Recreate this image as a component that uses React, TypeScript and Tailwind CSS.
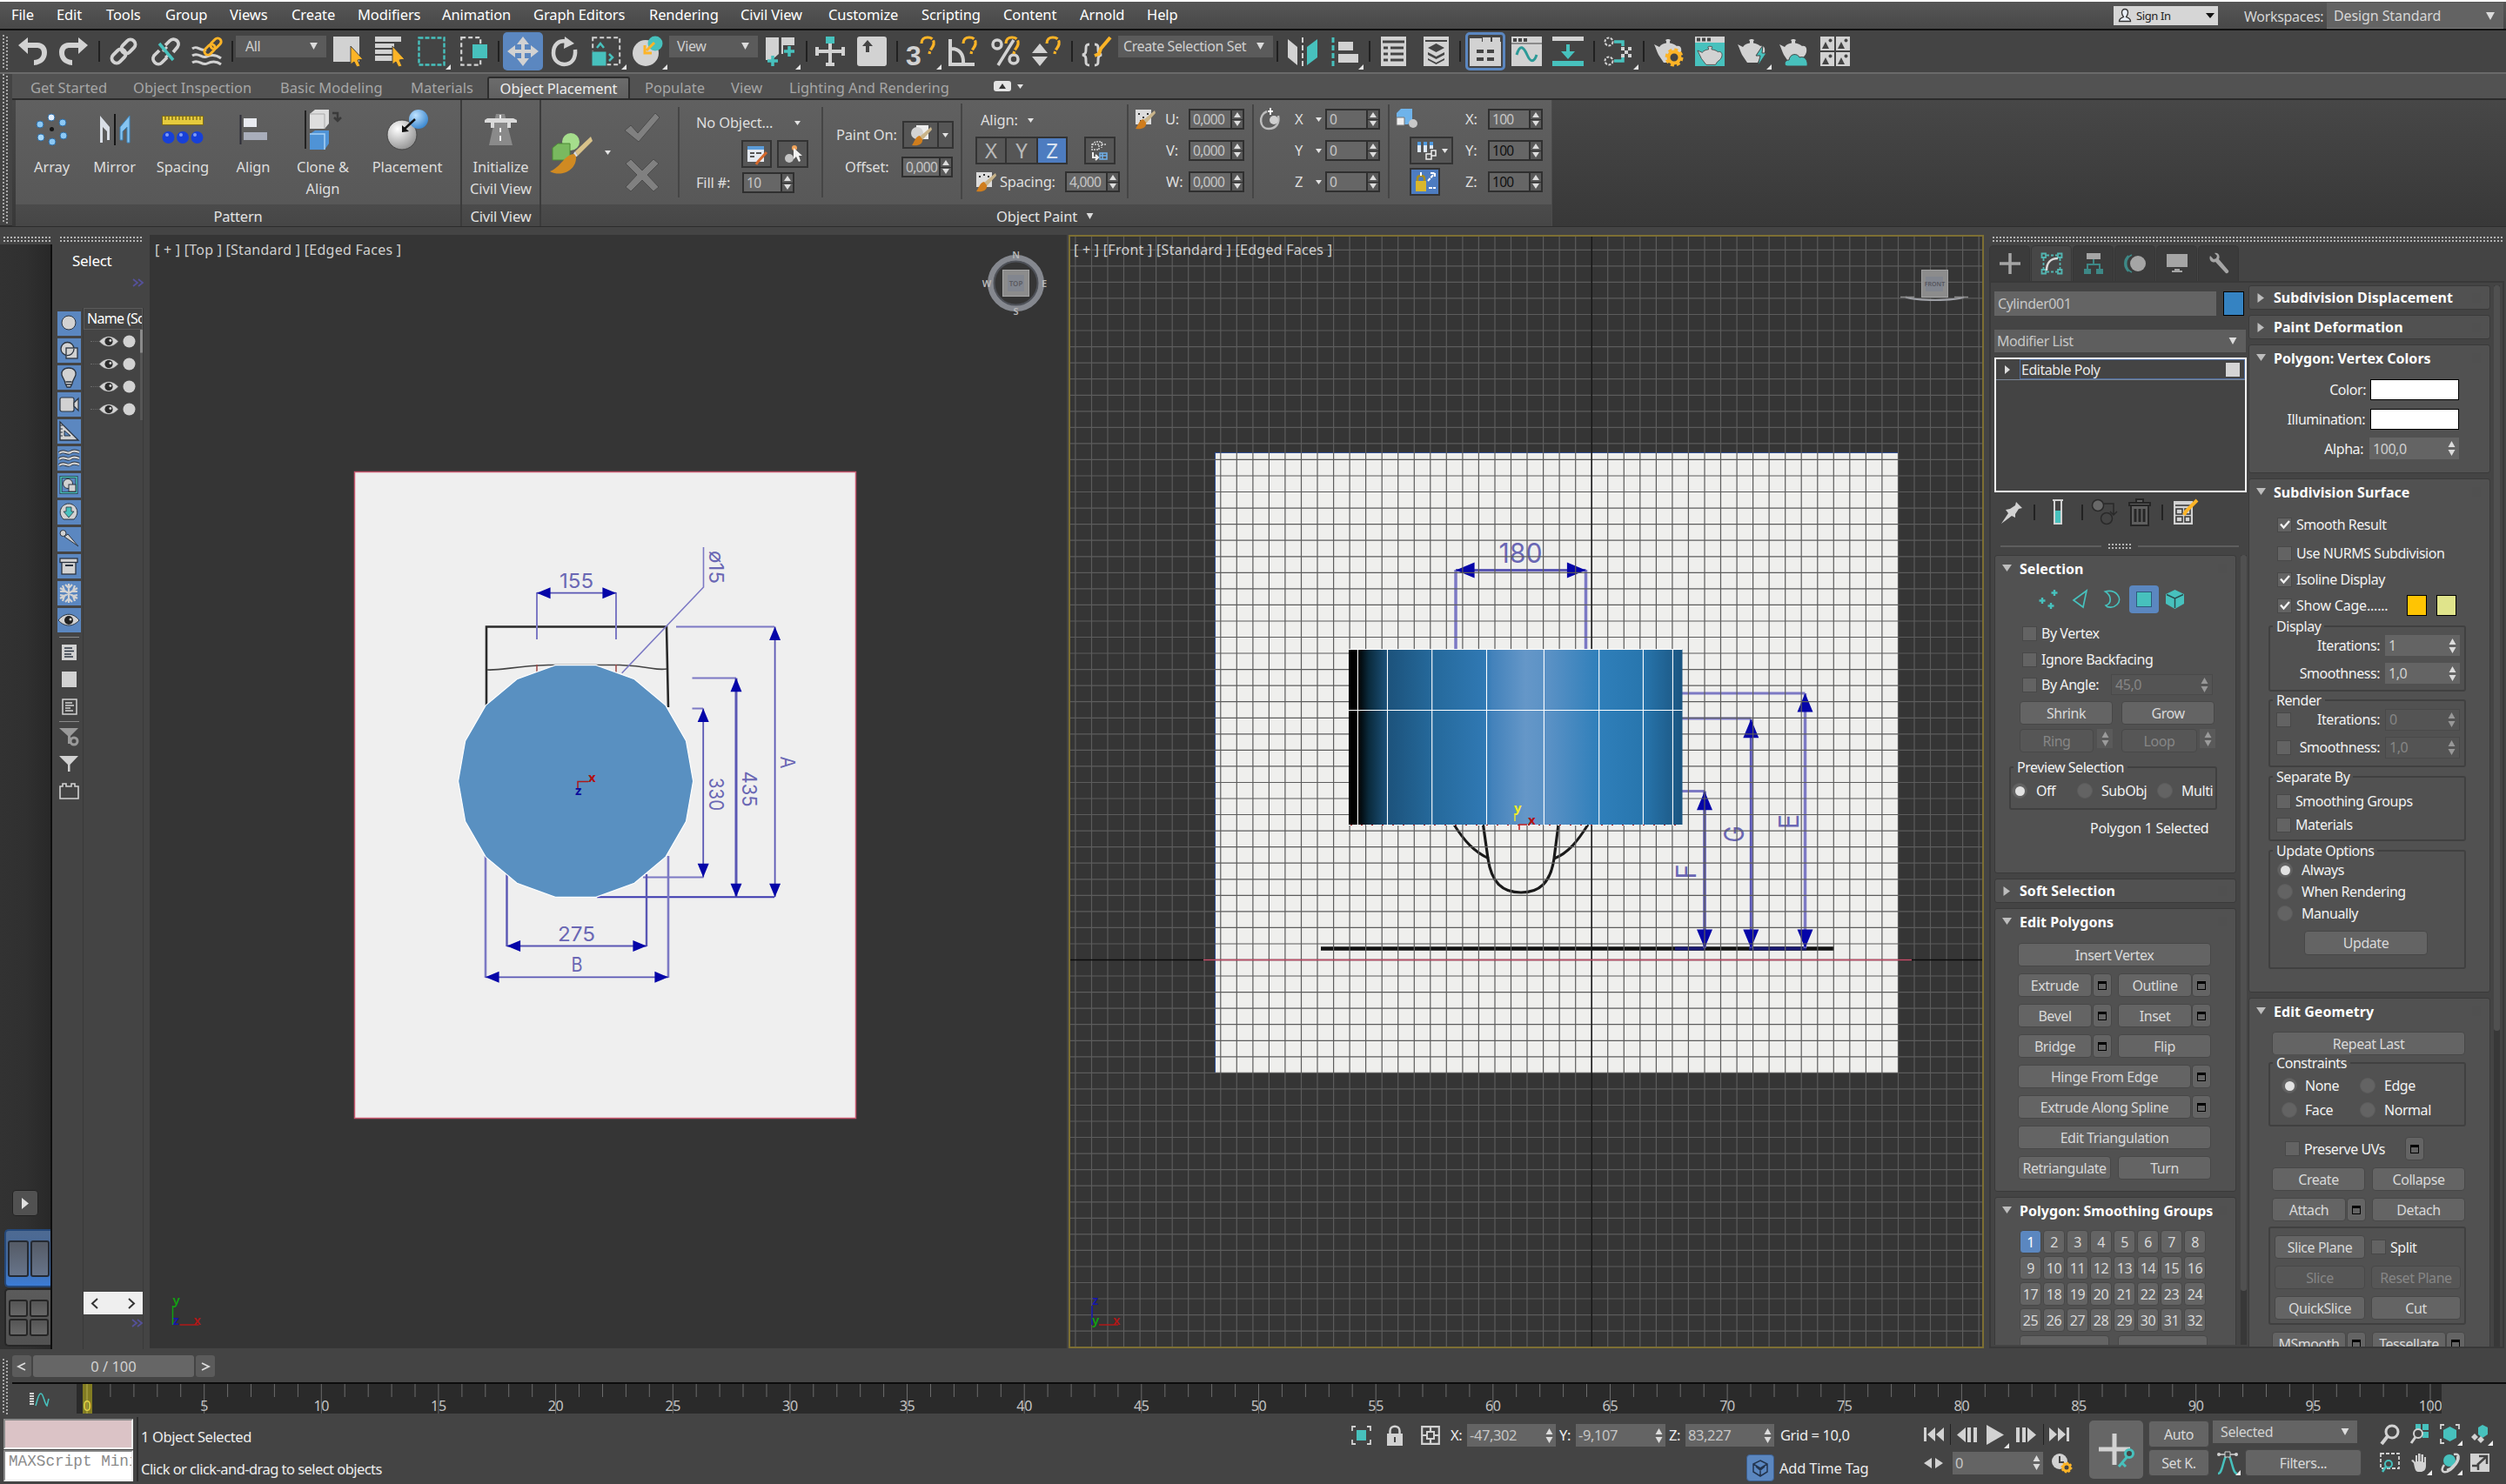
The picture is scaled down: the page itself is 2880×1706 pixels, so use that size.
import React from "react";

type Kids = { children?: React.ReactNode };

/* ---------- small building blocks ---------- */

function Svg({ w, h, vb, c = "", children }: { w: number; h: number; vb?: string; c?: string } & Kids) {
  return (
    <svg width={w} height={h} viewBox={vb ?? `0 0 ${w} ${h}`} className={"block shrink-0 overflow-visible " + c} fill="none">
      {children}
    </svg>
  );
}

const L = "#d2d2d2";
const T = "#47c1bd";
const O = "#fdb427";
const D = "#444444";

function Down({ c = "", w = 10, h = 9 }: { c?: string; w?: number; h?: number }) {
  return (
    <Svg w={w} h={h} vb="0 0 10 9" c={c}>
      <path d="M0 0H10L5 9Z" fill="#dcdcdc" />
    </Svg>
  );
}

function Arrows({ dim = false }: { dim?: boolean }) {
  return (
    <Svg w={9} h={17} c={dim ? "opacity-50" : ""}>
      <path d="M4.500 0L8.500 7H.5ZM4.500 17L8.500 10H.5Z" fill="#dcdcdc" />
    </Svg>
  );
}

function Grip({ c }: { c: string }) {
  return (
    <div className={"shrink-0 bg-[repeating-linear-gradient(90deg,#b4b4b4_0_2px,transparent_2px_4px)] pt-[2px] " + c}>
      <div className="h-[2px] bg-[#444444]" />
    </div>
  );
}

function VGrip({ c }: { c: string }) {
  return (
    <div className={"flex w-[6px] shrink-0 justify-between " + c}>
      <div className="h-full w-[2px] bg-[repeating-linear-gradient(180deg,#a8a8a8_0_2px,transparent_2px_4px)]" />
      <div className="mt-[2px] h-full w-[2px] bg-[repeating-linear-gradient(180deg,#a8a8a8_0_2px,transparent_2px_4px)]" />
    </div>
  );
}

/* ---------- menu bar ---------- */

const MENUS: [string, string][] = [
  ["File", "w-[52px]"], ["Edit", "w-[57px]"], ["Tools", "w-[68px]"], ["Group", "w-[74px]"], ["Views", "w-[71px]"],
  ["Create", "w-[76px]"], ["Modifiers", "w-[97px]"], ["Animation", "w-[105px]"], ["Graph Editors", "w-[133px]"],
  ["Rendering", "w-[105px]"], ["Civil View", "w-[101px]"], ["Customize", "w-[107px]"], ["Scripting", "w-[94px]"],
  ["Content", "w-[88px]"], ["Arnold", "w-[77px]"], ["Help", "w-[60px]"],
];

function MenuBar() {
  return (
    <div className="flex h-[35px] items-center border-t-2 border-b-2 border-t-white border-b-[#111] bg-linear-to-b from-[#565656] to-[#484848] pl-[13px] text-[16.5px] text-white">
      {MENUS.map(([t, w]) => (
        <span key={t} className={"mb-px shrink-0 whitespace-nowrap tracking-[-0.1px] " + w}>{t}</span>
      ))}
      <div className="ml-auto flex h-[22px] w-[120px] items-center bg-[#d6d6d6] pl-[5px] pr-[4px] text-[13px] tracking-[-0.4px] text-[#222]">
        <Svg w={16} h={17}>
          <path d="M8 1.500C10.500 1.500 11.500 3 11.500 5.500C11.500 8 10 9.500 9.500 10.500C12 11.500 14.500 12 14.500 15.500H1.500C1.500 12 4 11.500 6.500 10.500C6 9.500 4.500 8 4.500 5.500C4.500 3 5.500 1.500 8 1.500Z" fill="#e8eef6" stroke="#333" strokeWidth="1.300" />
        </Svg>
        <span className="ml-[5px]">Sign In</span>
        <Svg w={10} h={6} c="ml-auto"><path d="M0 0H10L5 6Z" fill="#111" /></Svg>
      </div>
      <span className="ml-[30px] mt-[2px] w-[95px] text-[16px] tracking-[-0.3px] text-[#d6d6d6]">Workspaces:</span>
      <div className="mr-[3px] flex h-[30px] w-[203px] items-center border-b border-[#777] bg-[#636363] pl-[8px] pr-[10px] pt-[2px] text-[16px] tracking-[-0.1px] text-[#d6d6d6]">
        Design Standard
        <Down c="ml-auto" />
      </div>
    </div>
  );
}

/* ---------- main toolbar ---------- */

function Flyout() {
  return (
    <Svg w={6} h={6} c="mb-[3px] self-end">
      <path d="M6 0V6H0Z" fill="#e6e6e6" />
    </Svg>
  );
}

function Sep({ c }: { c: string }) {
  return <div className={"h-[24px] w-[2px] shrink-0 bg-[#202020] " + c} />;
}

function Combo({ t, c }: { t: string; c: string }) {
  return (
    <div className={"mb-[12px] flex h-[25px] shrink-0 items-center bg-[#5b5b5b] pr-[10px] text-[16px] tracking-[-0.4px] text-[#cfcfcf] " + c}>
      <span className="whitespace-nowrap">{t}</span>
      <Down c="ml-auto" w={9} h={8} />
    </div>
  );
}

const POT = "M1 9L7 12C9 9 12 8 15 7.500V5.500L14 4L16 3H18L20 4L19 5.500V7.500C22 8 25 9 27 11C31 10 33 13 32 18C31 22 28 24 26 26L24 30H12L6 21C4 17 3 13 1 9Z";

function Magnet() {
  return <path d="M17 8C17 3 20 1 24 1C29 1 32 4 31 9C30 13 27 14 26 20" stroke={O} strokeWidth="3.200" strokeDasharray="17 2 12 2 3" />;
}

function Toolbar() {
  return (
    <div className="flex h-[50px] items-center border-b-2 border-[#6a6a6a] bg-[#444444] pl-[3px]">
      <VGrip c="h-[38px]" />
      <Svg w={33} h={34} c="ml-[12px]">
        <path d="M11 1V7H22C29 7 33 12 33 18C33 26 28 32 18 33V27C24 27 27 23 27 19C27 15 25 13 21 13H11V20L0 10Z" fill={L} />
      </Svg>
      <Svg w={33} h={34} c="ml-[14px]">
        <path d="M22 1V7H11C4 7 0 12 0 18C0 26 5 32 15 33V27C9 27 6 23 6 19C6 15 8 13 12 13H22V20L33 10Z" fill={L} />
      </Svg>
      <Sep c="ml-[12px]" />
      <Svg w={34} h={34} c="ml-[10px]">
        <g stroke={L} strokeWidth="4">
          <rect x="-5.500" y="-9" width="11" height="18" rx="5.500" transform="translate(22.500 11.500) rotate(45)" />
          <rect x="-5.500" y="-9" width="11" height="18" rx="5.500" transform="translate(11.500 22.500) rotate(45)" />
        </g>
      </Svg>
      <Svg w={34} h={34} c="ml-[15px]">
        <g stroke={L} strokeWidth="3.800">
          <path d="M16 10L21 5C26 0 34 6 30 12L25 18M18 24L12 30C7 35 -1 28 3 22L9 16" />
          <path d="M13 17L18 12M20 21L16 24" strokeWidth="3" />
        </g>
        <path d="M9 8L25 27" stroke={T} strokeWidth="3.500" />
      </Svg>
      <Svg w={35} h={34} c="ml-[12px]">
        <g stroke={L} strokeWidth="3">
          <path d="M1 14C7 9 10 18 17 15M1 22C8 17 12 26 18 23S30 22 34 25M1 30C8 25 12 34 18 31S30 29 34 32" />
        </g>
        <g stroke={O} strokeWidth="3">
          <rect x="-4" y="-7" width="8" height="14" rx="4" transform="translate(28 8) rotate(45)" />
          <rect x="-4" y="-7" width="8" height="14" rx="4" transform="translate(21 15) rotate(45)" />
        </g>
      </Svg>
      <Sep c="ml-[11px]" />
      <Combo t="All" c="ml-[3px] w-[104px] pl-[11px]" />
      <Svg w={34} h={36} c="ml-[8px]">
        <path d="M0 1H30V30H0Z" fill={L} />
        <path d="M20 12L34 27L28 28L31 35L27 36L24 30L20 33Z" fill={O} stroke={D} strokeWidth="1" />
      </Svg>
      <Svg w={34} h={36} c="ml-[14px]">
        <path d="M0 1H30V7H0ZM0 9H22V14H0ZM0 16H22V21H0ZM0 23H22V29H0Z" fill={L} />
        <path d="M20 12L34 27L28 28L31 35L27 36L24 30L20 33Z" fill={O} stroke={D} strokeWidth="1" />
      </Svg>
      <Svg w={32} h={34} c="ml-[15px]">
        <rect x="1.500" y="1.500" width="29" height="31" stroke={T} strokeWidth="2.400" strokeDasharray="5 2" />
      </Svg>
      <Flyout />
      <Svg w={32} h={34} c="ml-[11px]">
        <rect x="1.200" y="1.200" width="22" height="31.500" stroke={L} strokeWidth="2.200" strokeDasharray="5 3" />
        <rect x="14" y="9" width="17" height="16" fill={T} />
      </Svg>
      <Sep c="ml-[11px]" />
      <div className="ml-[4px] flex h-[44px] w-[46px] shrink-0 items-center justify-center rounded-[5px] bg-[#5b87c0]">
        <Svg w={36} h={34}>
          <path d="M18 0L25 9H20V15H27V10L36 17L27 24V19H20V25H25L18 34L11 25H16V19H9V24L0 17L9 10V15H16V9H11Z" fill={L} />
        </Svg>
      </div>
      <Svg w={32} h={34} c="ml-[9px]">
        <path d="M19 6C9 3 3 10 3 19C3 27 9 32 15.500 32C24 32 29 25 28 15" stroke={L} strokeWidth="4.500" />
        <path d="M16 0L27 8L15 14Z" fill={L} />
      </Svg>
      <Svg w={34} h={34} c="ml-[15px]">
        <rect x="1.200" y="1.200" width="31" height="31" stroke={L} strokeWidth="2" strokeDasharray="5 3" />
        <rect x="0" y="17" width="17" height="17" fill={T} stroke={D} strokeWidth="1" />
        <path d="M6 13L10 8L14 13M20 20L24 24L20 28" stroke={T} strokeWidth="2.500" />
      </Svg>
      <Flyout />
      <Svg w={34} h={34} c="ml-[7px]">
        <circle cx="15" cy="19" r="15" fill={L} />
        <circle cx="26" cy="8" r="8.500" fill={T} />
        <path d="M25 7L16 16M14 10V19H22" stroke={O} strokeWidth="3" />
      </Svg>
      <Flyout />
      <Combo t="View" c="ml-[2px] w-[102px] pl-[9px]" />
      <Svg w={34} h={34} c="ml-[9px]">
        <path d="M0 1H15V20L7 27H0ZM18 1H33V10H20V20H18Z" fill={L} />
        <path d="M8 22V34M2 28H14M27 11V23M21 17H33" stroke={T} strokeWidth="3.500" />
      </Svg>
      <Flyout />
      <Sep c="ml-[6px]" />
      <Svg w={34} h={34} c="ml-[9px]">
        <path d="M17 7V33M2 17H32M2 12V22M32 12V22M12 32H22" stroke={L} strokeWidth="4" />
        <rect x="12" y="0" width="10" height="8" fill={T} />
      </Svg>
      <Svg w={34} h={34} c="ml-[14px]">
        <rect width="34" height="34" rx="3" fill={L} />
        <path d="M12 4L18 11H14V18H10V11H6Z" fill={D} />
      </Svg>
      <Sep c="ml-[11px]" />
      <Svg w={34} h={34} c="ml-[10px]">
        <text x="-1" y="33" fontSize="32" fontWeight="700" fill={L} fontFamily="Liberation Sans">3</text>
        <Magnet />
      </Svg>
      <Flyout />
      <Svg w={34} h={34} c="ml-[8px]">
        <path d="M2 3V32H30M2 14C12 13 18 20 17 32" stroke={L} strokeWidth="4" />
        <Magnet />
      </Svg>
      <Svg w={34} h={34} c="ml-[15px]">
        <circle cx="7" cy="9" r="5" stroke={L} strokeWidth="3.500" />
        <circle cx="26" cy="26" r="5" stroke={L} strokeWidth="3.500" />
        <path d="M26 4L8 33" stroke={L} strokeWidth="3.500" />
        <Magnet />
      </Svg>
      <Svg w={34} h={34} c="ml-[13px]">
        <path d="M9 8L18 19H0ZM9 34L18 23H0Z" fill={L} />
        <Magnet />
      </Svg>
      <Sep c="ml-[11px]" />
      <Svg w={34} h={34} c="ml-[10px]">
        <path d="M9 9C5 9 5 11 5 14C5 18 5 20 1 21C5 22 5 24 5 28C5 31 5 33 9 33M15 9C19 9 19 11 19 14C19 18 19 20 23 21C19 22 19 24 19 28C19 31 19 33 15 33" stroke={L} strokeWidth="3" />
        <path d="M33 1L22 14L20 20L15 22" stroke={O} strokeWidth="4" />
      </Svg>
      <Combo t="Create Selection Set" c="ml-[8px] w-[178px] pl-[6px]" />
      <Sep c="ml-[4px]" />
      <Svg w={34} h={34} c="ml-[11px]">
        <path d="M0 3L11 12V33L0 24Z" fill={L} />
        <path d="M34 3L22 12V33L34 24Z" fill={T} />
        <path d="M17 1V34" stroke={L} strokeWidth="2" strokeDasharray="6 3" />
      </Svg>
      <Svg w={31} h={34} c="ml-[16px]">
        <path d="M2 1V34" stroke={T} strokeWidth="3" strokeDasharray="6 3" />
        <path d="M8 6H25V16H8ZM8 20H31V30H8Z" fill={L} />
      </Svg>
      <Flyout />
      <Sep c="ml-[6px]" />
      <Svg w={30} h={34} c="ml-[12px]">
        <rect width="29" height="34" fill={L} />
        <path d="M2 6H27M3 13H8M11 13H26M3 20H8M11 20H26M3 27H8M11 27H26" stroke={D} strokeWidth="3" />
      </Svg>
      <Svg w={30} h={34} c="ml-[19px]">
        <rect width="29" height="34" fill={L} />
        <path d="M2 5H27" stroke={D} strokeWidth="2" />
        <path d="M14.500 8L24 13L14.500 18L5 13ZM5 18L14.500 23L24 18V21L14.500 26L5 21ZM5 25L14.500 30L24 25V27L14.500 32L5 27Z" fill={D} />
      </Svg>
      <Sep c="ml-[11px]" />
      <div className="ml-[5px] flex h-[44px] w-[46px] shrink-0 items-center justify-center rounded-[5px] border-3 border-[#5b87c0]">
        <Svg w={36} h={34}>
          <path d="M0 2H14V6H36V34H0Z" fill={L} />
          <path d="M15 1H24V6H15ZM26 1H35V6H26Z" fill={L} />
          <path d="M8 17H16M20 17H28M8 26H16M20 26H28" stroke={D} strokeWidth="4" />
        </Svg>
      </div>
      <Svg w={35} h={34} c="ml-[7px]">
        <path d="M0 0H35V34H0Z" fill={L} />
        <path d="M2 4H6M8 4H12M14 4H18" stroke={D} strokeWidth="4" />
        <path d="M0 8H35" stroke={D} strokeWidth="1" />
        <path d="M6 21C10 8 14 12 18 21S26 30 29 21" stroke="#2c9a97" strokeWidth="3" />
      </Svg>
      <Svg w={36} h={34} c="ml-[12px]">
        <path d="M0 0H36V5H0Z" fill={L} />
        <path d="M0 28H36V34H0ZM16 9H20V17H26L18 26L10 17H16Z" fill={T} />
      </Svg>
      <Sep c="ml-[11px]" />
      <Svg w={34} h={34} c="ml-[10px]">
        <circle cx="6" cy="6" r="4.500" stroke={L} strokeWidth="2" strokeDasharray="3 1.500" />
        <circle cx="6" cy="28" r="4.500" stroke={L} strokeWidth="2" strokeDasharray="3 1.500" />
        <path d="M12 6H22V11M12 28H22V23" stroke={T} strokeWidth="3.500" />
        <path d="M20 12H24V16H20ZM28 12H32V16H28ZM24 16H28V20H24ZM20 20H24V24H20ZM28 20H32V24H28Z" fill={L} />
      </Svg>
      <Flyout />
      <Sep c="ml-[5px]" />
      <Svg w={36} h={34} c="ml-[10px]">
        <path d={POT} fill={L} />
        <circle cx="24" cy="24" r="6.500" fill={D} stroke={O} strokeWidth="4" />
        <circle cx="24" cy="24" r="9" stroke={O} strokeWidth="3" strokeDasharray="4 3.070" />
      </Svg>
      <Svg w={34} h={34} c="ml-[12px]">
        <rect width="34" height="34" fill={T} />
        <path d="M0 0H34V7H0Z" fill={L} />
        <path d="M2 3.500H6M8 3.500H12M14 3.500H18" stroke={D} strokeWidth="4" />
        <path transform="translate(2 9) scale(.9 .78)" d={POT} fill={L} stroke={D} strokeWidth="1" />
      </Svg>
      <Svg w={34} h={34} c="ml-[14px]">
        <path d={POT} fill={L} />
        <path d="M30 10L22 22H27L24 34L34 19H29Z" fill={T} stroke={D} strokeWidth="1" />
      </Svg>
      <Flyout />
      <Svg w={34} h={34} c="ml-[8px]">
        <path d={POT} fill={L} />
        <path d="M10 34C6 34 6 27 12 27C13 19 22 19 24 24C30 22 34 27 33 34Z" fill={T} stroke={D} strokeWidth="1" />
      </Svg>
      <Svg w={34} h={34} c="ml-[14px]">
        {[[0, 0], [18, 0], [0, 18], [18, 18]].map(([x, y]) => (
          <g key={`${x}-${y}`} transform={`translate(${x} ${y})`}>
            <rect width="16" height="16" fill={L} />
            <path d="M2 14L6 6L10 14Z" fill={D} />
            <circle cx="11.500" cy="4.500" r="2" fill={D} />
          </g>
        ))}
      </Svg>
    </div>
  );
}

/* ---------- ribbon ---------- */

const TABS: [string, string][] = [
  ["Get Started", "w-[118px]"], ["Object Inspection", "w-[169px]"], ["Basic Modeling", "w-[150px]"], ["Materials", "w-[88px]"],
];

function Tool({ label, w, children }: { label: string; w: string } & Kids) {
  return (
    <div className={"flex shrink-0 flex-col items-center " + w}>
      <div className="mt-[9px] flex h-[50px] items-center">{children}</div>
      <div className="mt-[5px] text-center text-[16.5px] leading-[25px] tracking-[-0.1px] text-[#dedede]">{label}</div>
    </div>
  );
}

function Panel({ title, w, children }: { title: string; w: string } & Kids) {
  return (
    <div className={"flex shrink-0 flex-col border-r-2 border-[#3b3b3b] " + w}>
      <div className="flex h-[120px] bg-linear-to-b from-[#606060] to-[#585858]">{children}</div>
      <div className="flex h-[25px] items-center justify-center bg-linear-to-b from-[#4b4b4b] to-[#464646] pt-[2px] text-[16.5px] tracking-[-0.2px] text-[#e2e2e2]">{title}</div>
    </div>
  );
}

function Spin({ v, c, dark }: { v: string; c: string; dark?: boolean }) {
  return (
    <div className={"flex h-[24px] shrink-0 border-2 border-[#2f2f2f] bg-[#666666] text-[15.5px] tracking-[-0.7px] " + (dark ? "text-[#111] " : "text-[#c6c6c6] ") + c}>
      <span className="flex-1 whitespace-nowrap pl-[3px] leading-[20px]">{v}</span>
      <div className="flex w-[14px] shrink-0 flex-col items-center justify-between border-l-2 border-[#2f2f2f] bg-[#5a5a5a] py-[2px]">
        <Svg w={8} h={6}><path d="M4 0L8 6H0Z" fill="#ddd" /></Svg>
        <div className="h-px w-full bg-[#2f2f2f]" />
        <Svg w={8} h={6}><path d="M4 6L8 0H0Z" fill="#ddd" /></Svg>
      </div>
    </div>
  );
}

function Sq({ c, children }: { c: string } & Kids) {
  return <div className={"flex h-[32px] shrink-0 items-center justify-center border-2 border-[#333] bg-[#565656] " + c}>{children}</div>;
}

function Tiny({ c = "" }: { c?: string }) {
  return <Svg w={7} h={5} c={c}><path d="M0 0H7L3.500 5Z" fill="#e4e4e4" /></Svg>;
}

function Brush() {
  return (
    <>
      <path d="M23 2L10 13L13 17L24 5Z" fill="#c9b48a" />
      <path d="M10 12C5 13 4 19 1 23C8 24 14 22 13 16Z" fill="#cf7d1d" />
    </>
  );
}

function XYZRow({ a, v, dark, tiny }: { a: string; v: string; dark?: boolean; tiny?: boolean }) {
  return (
    <div className="flex h-[24px] items-center">
      <span className="w-[22px]">{a}</span>
      {tiny && <Tiny c="mx-[2px]" />}
      <Spin v={v} dark={dark} c="ml-auto w-[63px]" />
    </div>
  );
}

function Ball({ cx, cy, r, f }: { cx: number; cy: number; r: number; f: string }) {
  return <circle cx={cx} cy={cy} r={r} fill={f} />;
}

function Ribbon() {
  return (
    <div className="flex h-[176px] border-b-2 border-[#2c2c2c]">
      <VGrip c="ml-[3px] h-[172px]" />
      <div className="ml-[5px] min-w-0 flex-1">
        <div className="flex h-[30px] items-center border-b-2 border-[#2b2b2b] bg-[#525252] pl-[21px] pt-[3px] text-[16.5px] text-[#a6a6a6]">
          {TABS.map(([t, w]) => (
            <span key={t} className={"shrink-0 whitespace-nowrap " + w}>{t}</span>
          ))}
          <div className="flex h-[25px] w-[164px] items-center justify-center rounded-t-[3px] border-2 border-b-0 border-[#2d2d2d] bg-linear-to-b from-[#6c6c6c] to-[#606060] tracking-[-0.1px] text-[#ededed]">
            Object Placement
          </div>
          <span className="ml-[17px] w-[99px]">Populate</span>
          <span className="w-[67px]">View</span>
          <span className="w-[235px] whitespace-nowrap">Lighting And Rendering</span>
          <div className="mb-[3px] flex h-[12px] w-[20px] items-center justify-center rounded-[3px] bg-[#e4e4e4]">
            <Svg w={8} h={6}><path d="M4 0L8 6H0Z" fill="#333" /></Svg>
          </div>
          <Tiny c="mb-[3px] ml-[7px]" />
        </div>
        <div className="flex h-[145px] bg-linear-to-b from-[#474747] to-[#383838] pl-[4px]">
          <Panel title="Pattern" w="w-[513px]">
            <Tool label="Array" w="ml-[6px] w-[71px]">
              <Svg w={38} h={38}>
                {[[18, 5, "#e4eefa"], [31, 11, "#8cc8f4"], [32, 26, "#8cc8f4"], [19, 33, "#8cc8f4"], [6, 28, "#a8d8f8"], [5, 13, "#8cc8f4"]].map(([x, y, f], i) => (
                  <circle key={i} cx={x} cy={y} r="4" fill={String(f)} stroke="#2d6ea8" strokeWidth="1" />
                ))}
                <circle cx="18.500" cy="18.500" r="2.500" fill="#161616" />
              </Svg>
            </Tool>
            <Tool label="Mirror" w="w-[73px]">
              <Svg w={36} h={36}>
                <path d="M1 2L12 15V30H9V20L4 15V33H1Z" fill="#d9dee6" />
                <path d="M35 2L24 15V30H27V20L32 15V33H35Z" fill="#86c4f2" stroke="#3f86bd" />
                <path d="M18 0V36" stroke="#161616" strokeWidth="2" />
              </Svg>
            </Tool>
            <Tool label="Spacing" w="w-[84px]">
              <Svg w={48} h={34}>
                <rect x=".5" y="1.500" width="47" height="10" fill="#e6cb3d" stroke="#7d6b17" />
                <path d="M4 2V6M8 2V6M12 2V6M16 2V6M20 2V6M24 2V6M28 2V6M32 2V6M36 2V6M40 2V6M44 2V6" stroke="#4d4110" />
                <Ball cx={7.500} cy={26} r={7} f="#1740d8" /><Ball cx={24} cy={26} r={7} f="#1740d8" /><Ball cx={40.500} cy={26} r={7} f="#1740d8" />
                <Ball cx={6} cy={23} r={2} f="#7f9bf5" /><Ball cx={22} cy={23} r={2} f="#7f9bf5" /><Ball cx={38} cy={23} r={2} f="#7f9bf5" />
              </Svg>
            </Tool>
            <Tool label="Align" w="w-[78px]">
              <Svg w={33} h={34}>
                <path d="M1.500 0V34" stroke="#2e2e38" strokeWidth="2" />
                <rect x="5" y="4" width="15" height="10" fill="#e8eaf0" />
                <rect x="5" y="20" width="27" height="9" fill="#a9aebb" />
              </Svg>
            </Tool>
            <Tool label="Clone & Align" w="w-[82px]">
              <Svg w={44} h={48}>
                <path d="M2 2V46" stroke="#222" strokeWidth="2" />
                <path d="M7 6L13 1H29V17L24 23H7Z" fill="#dedede" />
                <path d="M7 6H24V23" stroke="#aaa" />
                <path d="M7 29L13 25H29V40L24 47H7Z" fill="#4f93d6" />
                <path d="M7 29H24V47" stroke="#a9d2f5" strokeWidth="1.500" />
                <path d="M33 5H39V12M35 10L39 14L43 10" stroke="#3a3a3a" strokeWidth="2.500" />
              </Svg>
            </Tool>
            <Tool label="Placement" w="w-[112px]">
              <Svg w={48} h={48}>
                <defs>
                  <radialGradient id="ballA" cx=".35" cy=".3" r=".8"><stop offset="0" stopColor="#fff" /><stop offset="1" stopColor="#8a8a8a" /></radialGradient>
                  <radialGradient id="ballB" cx=".35" cy=".3" r=".8"><stop offset="0" stopColor="#bfe3ff" /><stop offset="1" stopColor="#2f7fca" /></radialGradient>
                </defs>
                <circle cx="18" cy="30" r="17" fill="url(#ballA)" stroke="#444" />
                <circle cx="37" cy="12" r="11" fill="url(#ballB)" />
                <path d="M33 12L20 24" stroke="#111" strokeWidth="2.500" /><path d="M18 27V19L26 26Z" fill="#111" />
              </Svg>
            </Tool>
          </Panel>
          <Panel title="Civil View" w="w-[91px]">
            <Tool label="Initialize Civil View" w="w-[89px]">
              <Svg w={40} h={40}>
                <path d="M14 2H24L33 38H6Z" fill="#8a8a8a" />
                <path d="M19 3V8M19 18V23M19 27V33" stroke="#eee" strokeWidth="2" />
                <path d="M1 9L4 7H34L38 9V12H31V18H27V12H12V18H8V12H1Z" fill="#dadada" />
              </Svg>
            </Tool>
          </Panel>
          <div className="flex w-[1162px] shrink-0 flex-col border-r border-[#4c4c4c]">
            <div className="flex h-[120px] bg-linear-to-b from-[#606060] to-[#585858] pl-[9px] text-[16.5px] tracking-[-0.2px] text-[#dedede]">
              <Svg w={50} h={48} c="mt-[37px]">
                <circle cx="25" cy="11" r="10" fill="#a5dd8c" />
                <path d="M4 18L10 13H24V27L19 32H4Z" fill="#79b95f" stroke="#4d8a35" />
                <path d="M48 5L30 22L33 27L50 10Z" fill="#d8c28a" />
                <path d="M30 22C26 25 29 31 33 27Z" fill="#ddd" />
                <path d="M29 25C18 25 14 40 1 45C14 52 32 44 31 28Z" fill="#d08a22" />
              </Svg>
              <Tiny c="ml-[14px] mt-[58px]" />
              <div className="ml-[13px] mt-[13px] flex w-[46px] flex-col items-center gap-[17px]">
                <Svg w={44} h={36}><path d="M2 22L9 16L17 25L37 2L42 7L18 35Z" fill="#808080" stroke="#4c4c4c" /></Svg>
                <Svg w={42} h={40}><path d="M2 7L8 2L21 15L34 2L40 7L27 20L40 34L34 39L21 26L8 39L2 34L15 20Z" fill="#808080" stroke="#4c4c4c" /></Svg>
              </div>
              <div className="ml-[18px] mt-[8px] h-[104px] w-[2px] bg-[#454545]" />
              <div className="ml-[19px] w-[130px]">
                <div className="mt-[16px] flex h-[20px] items-center"><span className="w-[113px]">No Object...</span><Tiny /></div>
                <div className="mt-[10px] flex gap-[6px] pl-[52px]">
                  <Sq c="w-[35px]"><Svg w={24} h={24}><path d="M1 3H20V21H1Z" fill="#e5e9f0" /><path d="M1 3H20V7H1Z" fill="#5b9bd8" /><path d="M4 11H9M4 15H9M11 11H17" stroke="#555" strokeWidth="2" /><path d="M23 10L13 21L11 24" stroke="#d4672a" strokeWidth="3" /></Svg></Sq>
                  <Sq c="w-[36px]"><Svg w={24} h={24}><circle cx="8" cy="17" r="5" fill="#c4c4c4" /><circle cx="14" cy="5" r="3" fill="#f0a35a" /><path d="M13 5V18L16 15L19 21L21 20L19 14H23Z" fill="#f2f2f2" /></Svg></Sq>
                </div>
                <div className="mt-[5px] flex h-[24px] items-center"><span className="w-[53px]">Fill #:</span><Spin v="10" c="w-[60px]" /></div>
              </div>
              <div className="ml-[14px] mt-[8px] h-[104px] w-[2px] bg-[#454545]" />
              <div className="ml-[15px] w-[135px]">
                <div className="mt-[24px] flex h-[32px] items-center">
                  <span className="w-[76px] whitespace-nowrap">Paint On:</span>
                  <Sq c="w-[42px]"><Svg w={26} h={26}><path d="M8 2H22V18H8Z" fill="#eee" /><circle cx="9" cy="11" r="7" fill="#d3d3d3" /><g transform="translate(2 2)"><Brush /></g></Svg></Sq>
                  <Sq c="-ml-[2px] w-[19px]"><Tiny /></Sq>
                </div>
                <div className="mt-[9px] flex h-[24px] items-center pl-[10px]"><span className="w-[65px]">Offset:</span><Spin v="0,000" c="w-[59px]" /></div>
              </div>
              <div className="ml-[8px] mt-[4px] h-[110px] w-[2px] bg-[#454545]" />
              <div className="ml-[15px] w-[168px]">
                <div className="mt-[13px] flex h-[20px] items-center pl-[6px]"><span className="w-[54px]">Align:</span><Tiny /></div>
                <div className="mt-[9px] flex text-[24px] text-[#b9b9b9]">
                  <Sq c="w-[36px]">X</Sq>
                  <Sq c="-ml-[2px] w-[38px]">Y</Sq>
                  <div className="-ml-[2px] flex h-[32px] w-[36px] items-center justify-center border-2 border-[#333] bg-[#4d7cc0] text-[#d8e2f0]">Z</div>
                  <Sq c="ml-[19px] w-[36px]"><Svg w={24} h={24}><path d="M3 5H11V11H3ZM3 5L7 2H14V9M14 5H19" stroke="#cfcfcf" strokeWidth="1.500" strokeDasharray="2 1" /><path d="M4 14V20H9M7 17L10 20L7 23" stroke="#eee" strokeWidth="2" /><path d="M12 15H20V22H12ZM15 15V22M12 18H20" stroke="#6fb0ea" strokeWidth="1.500" /></Svg></Sq>
                </div>
                <div className="mt-[8px] flex h-[24px] items-center">
                  <Svg w={25} h={24}><path d="M1 1H19V18H1Z" fill="#dcdcdc" /><path d="M4 6H6M9 4H11M14 6H16" stroke="#333" strokeWidth="2" /><Brush /></Svg>
                  <span className="ml-[3px] w-[75px]">Spacing:</span><Spin v="4,000" c="w-[63px]" />
                </div>
              </div>
              <div className="ml-[6px] mt-[5px] h-[108px] w-[2px] bg-[#454545]" />
              <div className="ml-[7px] mt-[10px] flex w-[126px] flex-col gap-[12px]">
                <div className="flex h-[24px] items-center">
                  <Svg w={25} h={24}><path d="M1 1H19V18H1Z" fill="#dcdcdc" /><path d="M4 6H6M9 10H11M14 6H16M6 14H8" stroke="#333" strokeWidth="2" /><Brush /></Svg>
                  <span className="ml-[10px]">U:</span><Spin v="0,000" c="ml-auto w-[64px]" />
                </div>
                <div className="flex h-[24px] items-center pl-[36px]">V:<Spin v="0,000" c="ml-auto w-[64px]" /></div>
                <div className="flex h-[24px] items-center pl-[36px]">W:<Spin v="0,000" c="ml-auto w-[64px]" /></div>
              </div>
              <div className="ml-[9px] mt-[5px] h-[108px] w-[2px] bg-[#454545]" />
              <Svg w={26} h={26} c="ml-[6px] mt-[9px]"><path d="M9 4C-1 8 0 24 11 24C19 24 24 18 22 9" stroke="#bdbdbd" strokeWidth="2.500" /><circle cx="17" cy="14" r="5" fill="#cfcfcf" /><path d="M10 4H16M13 0V8" stroke="#fff" strokeWidth="1.800" /></Svg>
              <div className="ml-[15px] mt-[10px] flex w-[98px] flex-col gap-[12px]">
                <XYZRow a="X" v="0" tiny /><XYZRow a="Y" v="0" tiny /><XYZRow a="Z" v="0" tiny />
              </div>
              <div className="ml-[9px] mt-[5px] h-[108px] w-[2px] bg-[#454545]" />
              <div className="ml-[7px] w-[66px]">
                <Svg w={26} h={24} c="mt-[9px]"><path d="M1 6L6 1H19V14L14 19H1Z" fill="#6fb3ea" /><path d="M1 11H10V20H1Z" fill="#f0f0f0" stroke="#777" /><circle cx="20" cy="18" r="5" fill="#c8c8c8" /></Svg>
                <div className="mt-[9px] flex pl-[16px]">
                  <Sq c="w-[50px] gap-[6px]"><Svg w={24} h={24}><path d="M2 2H6V14H2ZM9 2H13V14H9ZM16 2H20V10H16Z" fill="#dfe9f5" /><path d="M2 2H6V6H2ZM9 2H13V6H9ZM16 2H20V6H16Z" fill="#4f9ae0" /><path d="M12 16H18V22H12ZM18 12H23V18H18Z" stroke="#eee" strokeWidth="1.500" /></Svg><Tiny /></Sq>
                </div>
                <div className="ml-[16px] mt-[4px] flex h-[32px] w-[35px] items-center justify-center border-2 border-[#333] bg-[#4d7cc0]">
                  <Svg w={26} h={26}><path d="M2 12H14V24H2Z" fill="#d9b72c" /><path d="M4 12V9C4 5 12 5 12 9V12" stroke="#a88d1f" strokeWidth="2.500" /><path d="M8 6V1M16 12L24 3M17 20H25M19 3H24V8" stroke="#fff" strokeWidth="2" strokeDasharray="4 1" /></Svg>
                </div>
              </div>
              <div className="ml-[14px] mt-[10px] flex w-[89px] flex-col gap-[12px]">
                <XYZRow a="X:" v="100" /><XYZRow a="Y:" v="100" dark /><XYZRow a="Z:" v="100" dark />
              </div>
            </div>
            <div className="flex h-[25px] items-center bg-linear-to-b from-[#4b4b4b] to-[#464646] pl-[523px] pt-[2px] text-[16.5px] tracking-[-0.1px] text-[#e2e2e2]">
              Object Paint <Down w={11} h={7} c="ml-[9px]" />
            </div>
          </div>
        </div>
      </div>
    </div>
  );
}

/* ---------- scene explorer ---------- */

function Eye({ w = 24, h = 14 }: { w?: number; h?: number }) {
  return (
    <Svg w={w} h={h} vb="0 0 24 14">
      <path d="M0 7C7 -1.500 17 -1.500 24 7C17 15.500 7 15.500 0 7Z" fill={L} stroke={D} strokeWidth=".6" />
      <circle cx="12" cy="7" r="5" fill="#2b2b2b" /><circle cx="14" cy="6" r="1.600" fill={L} />
    </Svg>
  );
}

const K = "#2b3440";
const FILTERS: React.ReactNode[] = [
  <circle cx="13" cy="13" r="8" fill={L} stroke={K} />,
  <g fill={L} stroke={K} strokeWidth="1.300"><circle cx="11.500" cy="12" r="7.500" /><rect x="10" y="11" width="13" height="12" /><path d="M19 12A7.500 7.500 0 0 1 10.500 19.500" fill="none" /></g>,
  <path d="M13 3C19 3 22 7 21 11C20 15 17.500 16 17 21L15 25H11L9 21C8.500 16 6 15 5 11C4 7 7 3 13 3ZM9.500 19H16.500M9.500 22H16.500" fill={L} stroke={K} strokeWidth="1.300" />,
  <g fill={L} stroke={K} strokeWidth="1.200"><rect x="3" y="6" width="16" height="16" rx="2" /><path d="M19 12L24 7V21L19 16Z" /></g>,
  <g stroke={K}><path d="M3 3V24H24Z" fill={L} strokeWidth="1.300" /><path d="M8 13V19H15Z" fill="#5b87c0" /><path d="M3 7H6M3 11H6M3 15H6M3 19H6" /></g>,
  <g stroke={K} strokeWidth="4"><path d="M2 8C8 3 11 10 15 7S22 6 25 7M2 15C8 10 11 17 15 14S22 13 25 14M2 22C8 17 11 24 15 21S22 20 25 21" /><path stroke={L} strokeWidth="2.200" d="M2 8C8 3 11 10 15 7S22 6 25 7M2 15C8 10 11 17 15 14S22 13 25 14M2 22C8 17 11 24 15 21S22 20 25 21" /></g>,
  <g><rect x="4" y="4.500" width="18" height="18" stroke={K} strokeWidth="3" /><rect x="4" y="4.500" width="18" height="18" stroke={T} strokeWidth="1.500" /><circle cx="12" cy="12" r="5.500" fill={L} stroke={K} /><rect x="13" y="13" width="8" height="8" fill={L} stroke={K} /></g>,
  <g><path d="M7 22C-1 14 5 4 13 4S27 14 19 22Z" fill={L} stroke={K} /><path d="M10 8H16V13H19L13 20L7 13H10Z" fill={T} stroke={K} strokeWidth=".8" /></g>,
  <g fill={L} stroke={K}><circle cx="6.500" cy="7" r="3.500" /><path d="M8 11L12 8L24 22Z" /></g>,
  <g fill={L} stroke={K} strokeWidth="1.300"><rect x="5" y="9" width="16" height="14" /><rect x="3" y="5" width="20" height="4.500" /><path d="M9 13H18" strokeWidth="2" /></g>,
  <g stroke={L} strokeWidth="2.200"><path d="M13 3V25M3 8L23 20M3 20L23 8M9 4L13 8L17 4M9 24L13 20L17 24M3 12L8 11L6 5M23 12L18 11L20 5M3 16L8 17L6 23M23 16L18 17L20 23" /></g>,
  <g><path d="M1 14C8 5 18 5 25 14C18 22 8 22 1 14Z" fill={L} stroke={K} /><circle cx="13" cy="14" r="5" fill="#222" /><circle cx="15" cy="13" r="1.500" fill={L} /></g>,
];

function Chevrons({ c = "" }: { c?: string }) {
  return <Svg w={14} h={10} c={c}><path d="M1 1L6 5L1 9M7 1L12 5L7 9" stroke="#55519a" strokeWidth="1.800" /></Svg>;
}

function Explorer() {
  return (
    <div className="flex h-full w-[112px] shrink-0 flex-col bg-[#444444]">
      <Grip c="ml-[9px] mt-[11px] h-[6px] w-[94px]" />
      <div className="ml-[23px] mt-[11px] h-[22px] text-[17px] leading-[22px] tracking-[-0.3px] text-white">Select</div>
      <Chevrons c="ml-[92px] mt-[9px]" />
      <div className="mt-[24px] flex min-h-0 flex-1">
        <div className="flex w-[35px] flex-col items-center gap-[3px] pl-[3px] pt-[4px]">
          {FILTERS.map((f, i) => (
            <div key={i} className="flex h-[28px] w-[27px] shrink-0 items-center justify-center bg-[#5b87c0]"><Svg w={26} h={28}>{f}</Svg></div>
          ))}
          <div className="mt-[2px] h-px w-[23px] bg-[#8a8a8a]" />
          <Svg w={26} h={28}><rect x="5" y="5" width="17" height="18" fill={L} /><path d="M8 9H17M8 12.500H19M8 16H16M8 19H18" stroke={K} strokeWidth="1.400" /></Svg>
          <Svg w={26} h={28}><rect x="5" y="5" width="17" height="18" fill={L} /></Svg>
          <Svg w={26} h={28}><rect x="6" y="6" width="16" height="17" stroke={L} strokeWidth="1.500" /><path d="M9 10H17M9 13H19M9 16H15M9 19H18" stroke={L} strokeWidth="1.300" /></Svg>
          <div className="h-px w-[23px] bg-[#8a8a8a]" />
          <Svg w={26} h={28}><path d="M2 4H24L15 13V22H12V13Z" fill="#9a9a9a" /><circle cx="19" cy="19" r="4" fill={D} stroke="#9a9a9a" strokeWidth="3" /></Svg>
          <Svg w={26} h={28}><path d="M2 5H24L14.500 15V23H12V15Z" fill={L} /></Svg>
          <Svg w={26} h={28}><path d="M3 23V9H6V6H10V9H16V6H20V9H24V23Z" stroke={L} strokeWidth="1.600" /></Svg>
        </div>
        <div className="flex w-[70px] flex-col border-l border-r border-[#393939]">
          <div className="h-[25px] w-full overflow-hidden whitespace-nowrap border border-[#5a5a5a] pl-[3px] text-[16px] leading-[23px] tracking-[-0.7px] text-white">Name (So</div>
          <div className="flex">
            <div className="flex w-[65px] flex-col">
              {[0, 1, 2, 3].map((i) => (
                <div key={i} className="flex h-[26px] items-center gap-[5px]">
                  <div className="-mr-[5px] ml-[8px] h-px w-[10px] shrink-0 border-t border-dotted border-[#6a6a6a]" />
                  <Eye w={22} h={13} />
                  <Svg w={15} h={15}><circle cx="7.500" cy="7.500" r="7" fill={L} /></Svg>
                </div>
              ))}
            </div>
            <div className="h-[104px] w-[3px] bg-linear-to-b from-[#8a8a8a] from-25% to-[#555] to-26%" />
          </div>
          <div className="mt-auto flex h-[26px] items-center justify-between bg-[#efefef] px-[8px]">
            <Svg w={9} h={13}><path d="M8 1L2 6.500L8 12" stroke="#333" strokeWidth="2" /></Svg>
            <Svg w={9} h={13}><path d="M1 1L7 6.500L1 12" stroke="#333" strokeWidth="2" /></Svg>
          </div>
          <div className="h-[40px] shrink-0 pl-[55px] pt-[5px]"><Chevrons /></div>
        </div>
      </div>
    </div>
  );
}

function LayoutStrip() {
  return (
    <div className="flex h-full w-[60px] shrink-0 flex-col">
      <div className="h-[20px] shrink-0 bg-[#444444] pl-[4px] pt-[11px]"><Grip c="h-[6px] w-[54px]" /></div>
      <div className="flex min-h-0 flex-1 flex-col justify-end border-r-2 border-[#0e0e0e] bg-linear-to-r from-[#323232] via-[#303030] to-[#282828] pb-[3px]">
        <div className="ml-[14px] flex h-[30px] w-[30px] items-center justify-center rounded-[4px] border border-[#222] bg-[#515151]">
          <Svg w={8} h={13}><path d="M0 0L8 6.500L0 13Z" fill="#e0e0e0" /></Svg>
        </div>
        <div className="ml-[5px] mt-[15px] flex h-[67px] items-center justify-center gap-[2px] rounded-l-[5px] border-2 border-r-0 border-[#24487a] bg-linear-to-b from-[#4e6a92] via-[#44699c] to-[#3b7cd6]">
          <div className="h-[42px] w-[24px] rounded-[3px] border-2 border-[#252a33] bg-linear-to-b from-[#555b66] to-[#67748a]" />
          <div className="h-[42px] w-[22px] rounded-[3px] border-2 border-[#252a33] bg-linear-to-b from-[#555b66] to-[#67748a]" />
        </div>
        <div className="ml-[5px] mt-px flex h-[67px] items-center justify-center rounded-l-[5px] border-2 border-r-0 border-[#262626] bg-linear-to-b from-[#5b5b5b] to-[#525252]">
          <div className="grid grid-cols-2 gap-[2px]">
            {[0, 1, 2, 3].map((i) => (
              <div key={i} className="h-[20px] w-[22px] rounded-[3px] border-2 border-[#252525] bg-linear-to-b from-[#555] to-[#686868]" />
            ))}
          </div>
        </div>
      </div>
    </div>
  );
}

/* ---------- viewports ---------- */

const BL = "#0505a8";
const DM = "#7c79c4";

/* dimension line with an arrow head at both ends */
function Dim({ x1, y1, x2, y2, w = 1.800, c = "#5a57b4", s = 7 }: { x1: number; y1: number; x2: number; y2: number; w?: number; c?: string; s?: number }) {
  const v = x1 === x2;
  const n = s * 2.400;
  return (
    <g>
      <path d={`M${x1} ${y1}L${x2} ${y2}`} stroke={c} strokeWidth={w} />
      {v ? (
        <path d={`M${x1} ${y1}l${s} ${n}h${-2 * s}ZM${x2} ${y2}l${s} ${-n}h${-2 * s}Z`} fill={BL} />
      ) : (
        <path d={`M${x1} ${y1}l${n} ${s}v${-2 * s}ZM${x2} ${y2}l${-n} ${s}v${-2 * s}Z`} fill={BL} />
      )}
    </g>
  );
}

function Cad({ x, y, s, w, r, t }: { x: number; y: number; s: number; w: number; r?: number; t: string }) {
  return (
    <text x={x} y={y} fontSize={s} textLength={w} lengthAdjust="spacingAndGlyphs" textAnchor="middle" dominantBaseline="central"
      transform={r ? `rotate(${r} ${x} ${y})` : undefined} fill="#6a67b4" fontFamily="Inter, sans-serif" fontWeight="400">{t}</text>
  );
}

function Tripod({ x, y, up, cu, out, co }: { x: number; y: number; up: string; cu: string; out: string; co: string }) {
  return (
    <g fontSize="15" fontWeight="600" fontFamily="Noto Sans, sans-serif">
      <path d={`M${x} ${y}V${y - 22}`} stroke={cu} strokeWidth="1.500" /><path d={`M${x + 8} ${y}h22`} stroke="#b01818" strokeWidth="1.500" />
      <text x={x} y={y - 23} fill={cu}>{up}</text>
      <text x={x} y={y} fill={co}>{out}</text>
      <text x={x + 24} y={y} fill="#b01818">x</text>
    </g>
  );
}

const CIRCLE = Array.from({ length: 18 }, (_, i) => {
  const a = (i * 20 * Math.PI) / 180;
  return `${(661.600 + 135 * Math.cos(a)).toFixed(1)},${(898 + 135.500 * Math.sin(a)).toFixed(1)}`;
}).join(" ");

function TopView() {
  return (
    <svg width="1054" height="1280" viewBox="172 270 1054 1280" className="block" fill="none">
      <text x="178" y="293" fontSize="16" fill="#cfcfcf" fontFamily="Noto Sans, sans-serif" textLength="283">[ + ] [Top ] [Standard ] [Edged Faces ]</text>
      <circle cx="1167.500" cy="325.500" r="29" stroke="#85888f" strokeWidth="7" />
      <circle cx="1167.500" cy="325.500" r="25" stroke="#4e5158" strokeWidth="2" />
      <rect x="1152.500" y="310.500" width="30" height="30" fill="#8c8c8c" stroke="#a6a6a6" />
      <rect x="1158" y="316" width="19" height="19" fill="#82868f" />
      <g fill="#b9b9b9" fontFamily="Noto Sans, sans-serif" fontSize="11" fontWeight="600" textAnchor="middle">
        <text x="1167.500" y="297">N</text><text x="1167.500" y="362">S</text><text x="1134" y="330">W</text><text x="1200" y="330">E</text>
        <text x="1167.500" y="329" fontSize="8" fill="#5a5a60">TOP</text>
      </g>

      <rect x="407.500" y="542.500" width="576" height="743" fill="#efefef" stroke="#c8576f" strokeWidth="1.500" />
      <path d="M559 811V720.500H766L768 813" stroke="#2a2a2a" strokeWidth="2.600" />
      <path d="M560 770C575 771 590 766 630 764.500H712C750 766 752 771 766 769" stroke="#444" strokeWidth="1.600" />
      <path d="M617 764V774M708 764V774" stroke="#a04848" strokeWidth="1.500" />
      <g stroke={DM} strokeWidth="2">
        <path d="M617 681V735M708 681V735" />
        <path d="M808.500 629V675L714.700 773.700" strokeWidth="1.600" />
        <path d="M777 720.500H890M795.500 779.600H846M795.500 814.500H808M739 1008.500H808.500" />
        <path d="M686 1031.300H890" stroke="#3a37ae" />
        <path d="M558 984V1124M768 984V1124" strokeWidth="2.600" />
        <path d="M582.500 1005V1088M743 1005V1088" strokeWidth="2.400" stroke="#5a57b4" />
      </g>
      <Dim x1={617} y1={681.700} x2={708} y2={681.700} s={6.500} />
      <Dim x1={582.500} y1={1087.500} x2={743} y2={1087.500} s={6.500} />
      <Dim x1={558} y1={1123.300} x2={768} y2={1123.300} s={6.500} />
      <Dim x1={808.200} y1={814.500} x2={808.200} y2={1008.400} s={6.500} />
      <Dim x1={846} y1={779.600} x2={846} y2={1031.300} w={3} s={6.500} />
      <Dim x1={890.600} y1={720.500} x2={890.600} y2={1031.300} s={6.500} />
      <Cad x={662.500} y={667.500} s={23} w={39} t="155" />
      <Cad x={662.500} y={1073.500} s={23} w={43} t="275" />
      <Cad x={663} y={1109} s={23} w={13} t="B" />
      <Cad x={823} y={652} s={23} w={38} r={90} t="ø15" />
      <Cad x={823} y={913} s={23} w={38} r={90} t="330" />
      <Cad x={861} y={907} s={23} w={41} r={90} t="435" />
      <Cad x={905} y={876.500} s={23} w={14} r={90} t="A" />
      <polygon points={CIRCLE} fill="#5990c1" stroke="#fff" strokeWidth="1.200" />
      <path d="M664 907V898.500H676" stroke="#b01818" strokeWidth="1.500" />
      <g fontSize="15" fontWeight="700" fontFamily="Noto Sans, sans-serif">
        <text x="676" y="899" fill="#b01010">x</text><text x="661" y="914" fill="#0c0c9c">z</text>
      </g>
      <Tripod x={198.500} y={1523} up="y" cu="#12a012" out="z" co="#1414b0" />
    </svg>
  );
}

const VX = Array.from({ length: 57 }, (_, i) => 1829.200 + (i - 32) * 18.540);
const HY = Array.from({ length: 69 }, (_, i) => 1103.500 + (i - 44) * 18.550);

function FrontView() {
  return (
    <svg width="1048" height="1276" viewBox="1230 272 1048 1276" className="block" fill="none">
      <defs>
        <linearGradient id="side" x1="0" x2="1">
          <stop offset="0" stopColor="#000" /><stop offset=".028" stopColor="#000" /><stop offset=".06" stopColor="#0a2a3c" />
          <stop offset=".116" stopColor="#1c527b" /><stop offset=".25" stopColor="#25699b" /><stop offset=".41" stopColor="#3079b4" />
          <stop offset=".43" stopColor="#4382bb" /><stop offset=".53" stopColor="#6597c8" /><stop offset=".6" stopColor="#5a91c5" />
          <stop offset=".75" stopColor="#2f7fba" /><stop offset=".88" stopColor="#2876ae" /><stop offset="1" stopColor="#1b5580" />
        </linearGradient>
      </defs>
      <rect x="1396.500" y="520.500" width="785" height="713" fill="#efefed" stroke="#2c4d96" />
      <path d="M1518 1090.500H2108" stroke="#111" strokeWidth="4.500" />
      <path d="M1925 1090.500H1960M2010 1090.500H2076" stroke="#191970" strokeWidth="4" />
      <path d="M1671 948C1683 967 1694 979 1711 987M1825 948C1813 967 1802 981 1786 987" stroke="#1a1a1a" strokeWidth="3" />
      <path d="M1704.500 948L1710 987C1714 1014 1726 1026 1748 1026S1782 1014 1786 987L1791 948" stroke="#1a1a1a" strokeWidth="3.200" />
      <g stroke={DM} strokeWidth="3">
        <path d="M1673 655V746M1822.500 655V746" strokeWidth="3.500" />
        <path d="M1933 797H2074.500M1933 826H2012M1933 909.500H1959" />
      </g>
      <Dim x1={1673} y1={655.600} x2={1822.500} y2={655.600} w={3} s={9} />
      <Dim x1={1959} y1={909.600} x2={1959} y2={1090} w={3.500} s={9} />
      <Dim x1={2012.300} y1={826.700} x2={2012.300} y2={1090} w={3} s={9} />
      <Dim x1={2074.500} y1={797} x2={2074.500} y2={1090} w={3.500} s={9} c={DM} />
      <Cad x={1747.500} y={635} s={31} w={50} t="180" />
      <Cad x={1937} y={1002} s={31} w={17} r={-90} t="F" />
      <Cad x={1992} y={959} s={31} w={19} r={-90} t="G" />
      <Cad x={2055} y={944.500} s={31} w={17} r={-90} t="E" />
      <g stroke="#5c5c5c" strokeWidth="1.200">
        {VX.map((x) => <path key={x} d={`M${x.toFixed(1)} 272V1548`} />)}
        {HY.map((y) => <path key={y} d={`M1230 ${y.toFixed(1)}H2278`} />)}
      </g>
      <path d="M1829.200 272V1548M1230 1103.500H2278" stroke="#0c0c0c" strokeWidth="1.300" />
      <path d="M1383 1103.500H2197" stroke="#c8506c" strokeWidth="1.500" />

      <rect x="1550" y="746" width="383.500" height="202" fill="url(#side)" />
      <path d="M1550 746.500H1933.500M1550 816.500H1933.500M1560.400 746V948M1594.500 746V948M1645.700 746V948M1708.500 746V948M1774.400 746V948M1837.700 746V948M1888.400 746V948M1922.400 746V948" stroke="#fff" strokeWidth="1.100" />
      <path d="M1550 948.500H1933.500" stroke="#fff" strokeDasharray="2 2" /><path d="M1552 948.500H1933.500" stroke="#a81c1c" strokeDasharray="2 10" />
      <path d="M1741 944V935" stroke="#e8e23a" strokeWidth="1.500" /><path d="M1746 954V948H1755" stroke="#c01c1c" strokeWidth="1.500" />
      <g fontSize="15" fontWeight="700" fontFamily="Noto Sans, sans-serif">
        <text x="1740" y="934" fill="#f0ec28">y</text><text x="1756" y="948" fill="#b01010">x</text>
      </g>

      <text x="1234" y="293" fontSize="16" fill="#cfcfcf" fontFamily="Noto Sans, sans-serif" textLength="297">[ + ] [Front ] [Standard ] [Edged Faces ]</text>
      <rect x="2208.500" y="310.500" width="30" height="31" fill="#8c8c8c" stroke="#a2a2a2" />
      <rect x="2213" y="318" width="20" height="17" fill="#82868f" />
      <text x="2223.500" y="329" fontSize="7" textAnchor="middle" fill="#55555c" fontWeight="600" fontFamily="Noto Sans, sans-serif">FRONT</text>
      <path d="M2190 341.500C2202 346 2246 346 2257 341.500" stroke="#a0a2a8" strokeWidth="2" /><path d="M2184 341.500H2200M2246 341.500H2262" stroke="#8c8c8c" strokeWidth="1.500" />
      <Tripod x={1255} y={1523} up="z" cu="#1414b0" out="y" co="#12a012" />
    </svg>
  );
}

/* ---------- command panel ---------- */

function Dots({ c = "" }: { c?: string }) {
  return (
    <div className={"h-[11px] w-[10px] shrink-0 bg-[#505050] bg-[radial-gradient(#858585_35%,transparent_40%)] bg-[length:2px_2px] " + c} />
  );
}

function Rollup({ t, open = true, h, children }: { t: string; open?: boolean; h: string } & Kids) {
  return (
    <div className={"mb-[6px] flex w-[278px] shrink-0 flex-col rounded-[3px] border border-[#3a3a3a] bg-[#515151] text-[16px] tracking-[-0.45px] text-[#f2f2f2] " + h}>
      <div className={"flex shrink-0 items-center pl-[8px] pr-[10px] " + (open ? "h-[29px]" : "h-full")}>
        <Svg w={11} h={11}>{open ? <path d="M0 1H11L5.500 9Z" fill="#bdbdbd" /> : <path d="M1.500 0L9 5.500L1.500 11Z" fill="#bdbdbd" />}</Svg>
        <span className="ml-[9px] mr-[6px] h-[24px] flex-1 overflow-hidden whitespace-nowrap font-bold leading-[24px] tracking-[0.05px] text-white">{t}</span>
        <Dots />
      </div>
      {children}
    </div>
  );
}

function Btn({ t, w, off, h = "h-[27px]", on }: { t: string; w: string; off?: boolean; h?: string; on?: boolean }) {
  return (
    <div className={"flex shrink-0 items-center justify-center whitespace-nowrap rounded-[4px] border " + h + " " + w + " " + (off ? "border-[#484848] bg-[#565656] text-[#868686]" : on ? "border-[#474747] bg-[#5b87c0] text-white" : "border-[#474747] bg-[#646464] text-[#d9d9d9]")}>{t}</div>
  );
}

function Cfg({ c = "" }: { c?: string }) {
  return (
    <div className={"flex h-[27px] w-[22px] shrink-0 items-center justify-center rounded-[4px] border border-[#474747] bg-[#646464] " + c}>
      <div className="h-[10px] w-[10px] border border-t-3 border-black" />
    </div>
  );
}

function Box({ on, c = "" }: { on?: boolean; c?: string }) {
  return (
    <div className={"flex h-[17px] w-[17px] shrink-0 items-center justify-center border border-[#484848] bg-[#636363] " + c}>
      {on && <Svg w={12} h={10}><path d="M1 4.500L4.500 8.500L11 1" stroke="#f2f2f2" strokeWidth="2.400" /></Svg>}
    </div>
  );
}

function Radio({ on }: { on?: boolean }) {
  return (
    <div className="flex h-[18px] w-[18px] shrink-0 items-center justify-center rounded-full border border-[#5c5c5c] bg-[#636363]">
      {on && <div className="h-[11px] w-[11px] rounded-full bg-[#e2e2e2]" />}
    </div>
  );
}

function Field({ v, w, off, h = "h-[23px]" }: { v: string; w: string; off?: boolean; h?: string }) {
  return (
    <div className={"flex shrink-0 items-center pl-[4px] pr-[4px] " + h + " " + w + " " + (off ? "border border-[#494949] bg-[#545454] text-[#868686]" : "bg-[#646464] text-[#d0d0d0]")}>
      <span className="flex-1">{v}</span>
      <Arrows dim={off} />
    </div>
  );
}

function Group({ t, c, children }: { t?: string; c: string } & Kids) {
  return (
    <div className={"flex shrink-0 flex-col rounded-[3px] border-2 border-[#404040] " + c}>
      {t && <span className="-mt-[11px] ml-[3px] h-[20px] shrink-0 self-start bg-[#515151] px-[4px] leading-[20px]">{t}</span>}
      {children}
    </div>
  );
}

function LeftRollups() {
  return (
    <div className="flex h-[908px] overflow-hidden">
      <div className="flex w-[283px] shrink-0 flex-col">
        <Rollup t="Selection" h="h-[366px]">
          <div className="mt-[5px] flex h-[32px] items-center pl-[50px]">
            <Svg w={24} h={24}><path d="M18 1V8M14.500 4.500H21.500M4 10V17M.5 13.500H7.500M14 16V23M10.500 19.500H17.500" stroke={T} strokeWidth="2.400" /></Svg>
            <Svg w={20} h={22} c="ml-[14px]"><path d="M2 12L17 1L13 20Z" stroke={T} strokeWidth="1.700" /></Svg>
            <Svg w={19} h={22} c="ml-[17px]"><path d="M1.500 2C14 -1 22 10 15 17C11 21 4 21 2 18C9 16 9 7 1.500 2Z" stroke={T} strokeWidth="1.700" /></Svg>
            <div className="ml-[10px] flex h-[32px] w-[34px] items-center justify-center rounded-[4px] bg-[#5b87c0]"><div className="h-[18px] w-[18px] border border-[#2d5a7c] bg-[#47c1bd]" /></div>
            <Svg w={21} h={22} c="ml-[8px]"><path d="M10.500 0L21 5V16L10.500 22L0 16V5Z" fill={T} /><path d="M1 5.500L10.500 10L20 5.500M10.500 10V21" stroke="#2b4a4c" strokeWidth="1.500" /></Svg>
          </div>
          <div className="mt-[13px] flex h-[20px] items-center pl-[31px]"><Box /><span className="ml-[5px]">By Vertex</span></div>
          <div className="mt-[10px] flex h-[20px] items-center pl-[31px]"><Box /><span className="ml-[5px]">Ignore Backfacing</span></div>
          <div className="mt-[7px] flex h-[24px] items-center pl-[31px]"><Box /><span className="ml-[5px] w-[80px]">By Angle:</span><Field v="45,0" w="w-[117px]" off h="h-[24px]" /></div>
          <div className="mt-[7px] flex gap-[10px] pl-[28px]"><Btn t="Shrink" w="w-[107px]" /><Btn t="Grow" w="w-[107px]" /></div>
          <div className="mt-[5px] flex pl-[28px]">
            <Btn t="Ring" w="w-[85px]" off />
            <div className="ml-[4px] flex h-[22px] w-[18px] items-center justify-center bg-[#5a5a5a]"><Arrows dim /></div>
            <Btn t="Loop" w="ml-[10px] w-[87px]" off />
            <div className="ml-[3px] flex h-[22px] w-[18px] items-center justify-center bg-[#5a5a5a]"><Arrows dim /></div>
          </div>
          <Group t="Preview Selection" c="ml-[16px] mt-[16px] h-[50px] w-[239px]">
            <div className="mt-[7px] flex h-[20px] items-center pl-px">
              <Radio on /><span className="ml-[10px] w-[47px]">Off</span>
              <Radio /><span className="ml-[10px] w-[64px]">SubObj</span>
              <Radio /><span className="ml-[10px]">Multi</span>
            </div>
          </Group>
          <div className="ml-[109px] mt-[11px] h-[20px] whitespace-nowrap leading-[20px] tracking-[-0.3px]">Polygon 1 Selected</div>
        </Rollup>
        <Rollup t="Soft Selection" open={false} h="h-[28px]" />
        <Rollup t="Edit Polygons" h="h-[326px]">
          <div className="flex flex-col gap-[8px] pl-[26px] pt-[10px]">
            <Btn t="Insert Vertex" w="w-[222px]" />
            <div className="flex"><Btn t="Extrude" w="w-[85px]" /><Cfg c="ml-[1px]" /><Btn t="Outline" w="ml-[7px] w-[85px]" /><Cfg /></div>
            <div className="flex"><Btn t="Bevel" w="w-[85px]" /><Cfg c="ml-[1px]" /><Btn t="Inset" w="ml-[7px] w-[85px]" /><Cfg /></div>
            <div className="flex"><Btn t="Bridge" w="w-[85px]" /><Cfg c="ml-[1px]" /><Btn t="Flip" w="ml-[7px] w-[107px]" /></div>
            <div className="flex"><Btn t="Hinge From Edge" w="w-[199px]" /><Cfg c="ml-[1px]" /></div>
            <div className="flex"><Btn t="Extrude Along Spline" w="w-[199px]" /><Cfg c="ml-[1px]" /></div>
            <Btn t="Edit Triangulation" w="w-[222px]" />
            <div className="flex gap-[8px]"><Btn t="Retriangulate" w="w-[107px]" /><Btn t="Turn" w="w-[107px]" /></div>
          </div>
        </Rollup>
        <Rollup t="Polygon: Smoothing Groups" h="h-[220px]">
          <div className="grid grid-cols-8 gap-y-[3px] pl-[28px] pr-[32px] pt-[8px]">
            {Array.from({ length: 32 }, (_, i) => <Btn key={i} t={String(i + 1)} w="w-[25px]" on={i === 0} />)}
          </div>
          <div className="mt-[4px] flex gap-[10px] pl-[28px]"><Btn t="" w="w-[103px]" /><Btn t="" w="w-[103px]" /></div>
        </Rollup>
      </div>
      <div className="w-[7px] shrink-0 bg-[#383838]"><div className="h-[846px] rounded-[3px] bg-[#505050]" /></div>
    </div>
  );
}

const ICON_TABS: React.ReactNode[] = [
  <path d="M12 0V24M0 12H24" stroke="#a5a5a5" strokeWidth="3.500" />,
  <g stroke="#52b5b1" strokeWidth="1.800"><path d="M2.500 6V18M21.500 6V18M6 2.500H18M6 21.500H18" strokeDasharray="3 2" /><path d="M.5 .5H5V5H.5ZM19 .5H23.500V5H19ZM.5 19H5V23.500H.5ZM19 19H23.500V23.500H19Z" /><path d="M6 20C6 11 11 6 19 6" stroke="#dadada" strokeWidth="2.500" /></g>,
  <g><rect x="4" y="0" width="16" height="7" fill="#a5a5a5" /><path d="M12 7V13M5 18V13H19V18" stroke="#3d8886" strokeWidth="2" /><path d="M1 18H9V24H1ZM15 18H23V24H15Z" fill="#3d8886" /></g>,
  <g><path d="M8 2A11 11 0 0 0 8 22M4 3A12 12 0 0 0 4 21" stroke="#3d8886" strokeWidth="1.800" /><circle cx="15" cy="12" r="9" fill="#a5a5a5" /></g>,
  <path d="M0 1H24V16H0ZM9 18H15V20H18V22H6V20H9Z" fill="#a5a5a5" />,
  <path d="M2 3L6 7L9 6L10 3L7 0C11 -1 14 3 12 7L23 20C24 22 22 24 20 23L8 10C4 12 0 8 2 3Z" fill="#a5a5a5" />,
];

function CommandPanel() {
  return (
    <div className="flex h-full min-w-0 flex-1 flex-col bg-[#444444] pl-[6px]">
      <Grip c="ml-[4px] mt-[11px] h-[6px] w-[586px]" />
      <div className="mt-[4px] flex h-[41px] gap-px">
        {ICON_TABS.map((ic, i) => (
          <div key={i} className={"flex w-[47px] items-center justify-center rounded-t-[5px] border border-b-0 " + (i === 1 ? "border-[#383838] bg-[#474747]" : "border-[#363636] bg-[#3b3b3b]")}>
            <Svg w={24} h={24}>{ic}</Svg>
          </div>
        ))}
      </div>
      <div className="flex h-[1227px] w-[592px] overflow-hidden border-2 border-[#393939] pl-[4px]">
        <div className="flex w-[291px] shrink-0 flex-col text-[16px] tracking-[-0.45px]">
          <div className="mt-[10px] flex h-[28px]">
            <div className="flex h-full w-[255px] items-center bg-[#646464] pl-[4px] pb-px text-[#c6c6c6]">Cylinder001</div>
            <div className="ml-[8px] h-full w-[24px] border border-black bg-[#3583c2]" />
          </div>
          <div className="mt-[16px] flex h-[26px] w-[289px] items-center bg-[#5e5e5e] pl-[3px] pr-[10px] text-[#c6c6c6]">Modifier List<Down c="ml-auto" w={10} h={8} /></div>
          <div className="mt-[6px] h-[155px] w-[290px] border-2 border-[#f4f4f4]">
            <div className="flex h-[24px] items-center border-b border-[#7b8796] pl-[10px]">
              <Svg w={6} h={10}><path d="M0 0L6 5L0 10Z" fill="#ddd" /></Svg>
              <div className="ml-[11px] flex h-full flex-1 items-center justify-between border border-[#4f6da0] pl-px pr-[5px] text-[#e8e8e8]">Editable Poly<div className="h-[16px] w-[16px] bg-[#d4d4d4]" /></div>
            </div>
          </div>
          <div className="mt-[5px] flex h-[36px] items-center pl-[7px]">
            <Svg w={26} h={26}><path d="M18 1L25 8L21 9L17 15L17 19L13 17L1 26L9 14L6 10L11 9L17 5Z" fill={L} /></Svg>
            <div className="ml-[12px] h-[18px] w-[2px] bg-[#222]" />
            <Svg w={14} h={30} c="ml-[19px]"><path d="M1 1H13M3 1V28H11V1" stroke={L} strokeWidth="2" /><path d="M4 13H10V27H4Z" fill={T} /></Svg>
            <div className="ml-[20px] h-[18px] w-[2px] bg-[#222]" />
            <Svg w={32} h={30} c="ml-[9px]"><g stroke="#292929" strokeWidth="1.500"><circle cx="8" cy="7" r="6.500" fill="#686868" /><path d="M15 5H26V17M22 14L26 18L30 14" /><circle cx="18" cy="22" r="6.500" /></g></Svg>
            <Svg w={26} h={32} c="ml-[11px]"><g stroke="#262626" strokeWidth="2"><path d="M1 5H25V8H1ZM9 5V1H17V5M3 9V31H23V9" fill="#5f5f5f" /><path d="M8 12V27M13 12V27M18 12V27" strokeWidth="3" /></g></Svg>
            <div className="ml-[12px] h-[18px] w-[2px] bg-[#222]" />
            <Svg w={30} h={30} c="ml-[11px]"><path d="M1 2H23V29H1Z" fill={L} /><path d="M3 7H21M4 11H11V17H4ZM4 20H11V26H4ZM14 11H20V17H14ZM14 20H20V26H14Z" stroke="#333" strokeWidth="1.500" /><path d="M28 1L15 14L13 18" stroke={O} strokeWidth="4" /></Svg>
          </div>
          <div className="mt-[15px] flex h-[12px] items-center pl-[7px]">
            <div className="h-[2px] w-[116px] bg-[#5e5e5e]" />
            <Grip c="ml-[8px] h-[6px] w-[26px]" />
            <div className="ml-[8px] h-[2px] w-[116px] bg-[#5e5e5e]" />
          </div>
          <div className="mt-[4px]"><LeftRollups /></div>
        </div>
        <div className="flex w-[283px] shrink-0 flex-col pl-px pt-[3px]">
          <Rollup t="Subdivision Displacement" open={false} h="h-[28px]" />
          <Rollup t="Paint Deformation" open={false} h="h-[28px]" />
          <Rollup t="Polygon: Vertex Colors" h="h-[148px]">
            <div className="flex flex-col pr-[35px] pt-[10px]">
              <div className="flex h-[24px] items-center justify-end">Color:<div className="ml-[5px] h-[24px] w-[102px] border border-black bg-white" /></div>
              <div className="mt-[10px] flex h-[24px] items-center justify-end">Illumination:<div className="ml-[6px] h-[24px] w-[102px] border border-black bg-white" /></div>
              <div className="mt-[9px] flex h-[25px] items-center justify-end">Alpha:<span className="w-[7px]" /><Field v="100,0" w="w-[103px]" h="h-[25px]" /></div>
            </div>
          </Rollup>
          <Rollup t="Subdivision Surface" h="h-[591px]">
            <div className="mt-[11px] flex h-[24px] items-center pl-[32px]"><Box on /><span className="ml-[5px]">Smooth Result</span></div>
            <div className="mt-[9px] flex h-[24px] items-center pl-[32px]"><Box /><span className="ml-[5px]">Use NURMS Subdivision</span></div>
            <div className="mt-[6px] flex h-[24px] items-center pl-[32px]"><Box on /><span className="ml-[5px]">Isoline Display</span></div>
            <div className="mt-[6px] flex h-[24px] items-center pl-[32px]"><Box on /><span className="ml-[5px] w-[127px] tracking-[-0.2px]">Show Cage......</span>
              <div className="h-[24px] w-[23px] border border-black bg-[#ffc403]" /><div className="ml-[11px] h-[24px] w-[23px] border border-black bg-[#e0e48b]" /></div>
            <Group t="Display" c="ml-[22px] mt-[11px] h-[76px] w-[227px]">
              <div className="flex h-[24px] items-center justify-end pr-[5px]">Iterations:<span className="w-[6px]" /><Field v="1" w="w-[86px]" h="h-[24px]" /></div>
              <div className="mt-[8px] flex h-[24px] items-center justify-end pr-[5px]">Smoothness:<span className="w-[6px]" /><Field v="1,0" w="w-[86px]" h="h-[24px]" /></div>
            </Group>
            <Group t="Render" c="ml-[22px] mt-[9px] h-[78px] w-[227px]">
              <div className="flex h-[24px] items-center pl-[7px] pr-[5px]"><Box /><span className="ml-auto mr-[6px]">Iterations:</span><Field v="0" w="w-[86px]" off h="h-[25px]" /></div>
              <div className="mt-[8px] flex h-[24px] items-center pl-[7px] pr-[5px]"><Box /><span className="ml-auto mr-[6px]">Smoothness:</span><Field v="1,0" w="w-[86px]" off h="h-[25px]" /></div>
            </Group>
            <Group t="Separate By" c="ml-[22px] mt-[10px] h-[75px] w-[227px]">
              <div className="mt-[8px] flex h-[20px] items-center pl-[7px]"><Box /><span className="ml-[5px]">Smoothing Groups</span></div>
              <div className="mt-[7px] flex h-[20px] items-center pl-[7px]"><Box /><span className="ml-[5px]">Materials</span></div>
            </Group>
            <Group t="Update Options" c="ml-[22px] mt-[10px] h-[137px] w-[227px]">
              <div className="mt-[2px] flex h-[20px] items-center pl-[8px]"><Radio on /><span className="ml-[10px]">Always</span></div>
              <div className="mt-[5px] flex h-[20px] items-center pl-[8px]"><Radio /><span className="ml-[10px]">When Rendering</span></div>
              <div className="mt-[5px] flex h-[20px] items-center pl-[8px]"><Radio /><span className="ml-[10px]">Manually</span></div>
              <Btn t="Update" w="ml-[39px] mt-[10px] w-[142px]" h="h-[28px]" />
            </Group>
          </Rollup>
          <Rollup t="Edit Geometry" h="h-[450px]">
            <div className="flex flex-col pl-[26px] pt-[9px]">
              <Btn t="Repeat Last" w="w-[222px]" />
              <Group t="Constraints" c="-ml-[4px] mt-[8px] h-[74px] w-[227px]">
                <div className="mt-[6px] flex h-[20px] items-center pl-[13px]"><Radio on /><span className="ml-[9px] w-[63px]">None</span><Radio /><span className="ml-[10px]">Edge</span></div>
                <div className="mt-[8px] flex h-[20px] items-center pl-[13px]"><Radio /><span className="ml-[9px] w-[63px]">Face</span><Radio /><span className="ml-[10px]">Normal</span></div>
              </Group>
              <div className="mt-[12px] flex items-center pl-[15px]"><Box /><span className="ml-[5px] w-[116px]">Preserve UVs</span><Cfg /></div>
              <div className="mt-[8px] flex gap-[8px]"><Btn t="Create" w="w-[107px]" /><Btn t="Collapse" w="w-[107px]" /></div>
              <div className="mt-[8px] flex"><Btn t="Attach" w="w-[85px]" /><Cfg c="ml-px" /><Btn t="Detach" w="ml-[7px] w-[107px]" /></div>
              <Group c="-ml-[4px] mt-[6px] h-[113px] w-[227px]">
                <div className="mt-[8px] flex items-center pl-[5px]"><Btn t="Slice Plane" w="w-[104px]" /><Box c="ml-[7px]" /><span className="ml-[5px]">Split</span></div>
                <div className="mt-[8px] flex gap-[7px] pl-[5px]"><Btn t="Slice" w="w-[104px]" off /><Btn t="Reset Plane" w="w-[103px]" off /></div>
                <div className="mt-[8px] flex gap-[7px] pl-[5px]"><Btn t="QuickSlice" w="w-[104px]" /><Btn t="Cut" w="w-[103px]" /></div>
              </Group>
              <div className="mt-[8px] flex"><Btn t="MSmooth" w="w-[85px]" /><Cfg c="ml-px" /><Btn t="Tessellate" w="ml-[7px] w-[85px]" /><Cfg /></div>
            </div>
          </Rollup>
        </div>
        <div className="mt-[3px] w-[7px] shrink-0 bg-[#383838]"><div className="h-[857px] rounded-[3px] bg-[#505050]" /></div>
      </div>
    </div>
  );
}

/* ---------- time line and status ---------- */

const FRAME = 26.930;

function Timeline() {
  return (
    <div className="flex h-[75px]">
      <VGrip c="ml-[3px] mt-[11px] h-[62px]" />
      <div className="ml-[5px] flex-1">
        <div className="flex h-[38px] items-center gap-[2px] pt-px text-[16.5px] text-[#d2d2d2]">
          <div className="flex h-[25px] w-[22px] items-center justify-center rounded-[3px] bg-[#5b5b5b]"><Svg w={10} h={10}><path d="M9 1L1 5L9 9" stroke="#ddd" strokeWidth="1.800" /></Svg></div>
          <div className="flex h-[25px] w-[185px] items-center justify-center rounded-[3px] bg-[#666]">0 / 100</div>
          <div className="flex h-[25px] w-[22px] items-center justify-center rounded-[3px] bg-[#5b5b5b]"><Svg w={10} h={10}><path d="M1 1L9 5L1 9" stroke="#ddd" strokeWidth="1.800" /></Svg></div>
        </div>
        <div className="flex h-[37px] border-t-2 border-[#0c0c0c]">
          <div className="flex w-[74px] items-center pl-[20px]">
            <Svg w={24} h={18}><path d="M2.500 1V16" stroke={L} strokeWidth="5" strokeDasharray="2 1" /><path d="M7 16C9 10 10 2 13 2S17 14 20 16L22 8" stroke={T} strokeWidth="1.600" /></Svg>
          </div>
          <svg width="2718" height="35" viewBox="88 1592 2718 35" className="block" fill="none">
            <rect x="88" y="1592" width="2718" height="34" fill="#2a2a2a" />
            <rect x="95" y="1592" width="11" height="34" fill="#827c22" />
            {Array.from({ length: 101 }, (_, i) => (
              <path key={i} d={`M${(100 + i * FRAME).toFixed(1)} 1590V${i % 5 ? 1607 : 1626}`} stroke={i ? "#6c6c6c" : "#b5ae50"} />
            ))}
            {Array.from({ length: 21 }, (_, i) => (
              <text key={i} x={100 + i * 5 * FRAME} y="1623" textAnchor="middle" fontSize="16" letterSpacing="-0.300" fontFamily="Noto Sans, sans-serif" fill={i ? "#c4c4c4" : "#e6d94a"}>{i * 5}</text>
            ))}
          </svg>
        </div>
      </div>
    </div>
  );
}

function SField({ v, c }: { v: string; c: string }) {
  return (
    <div className={"flex h-[26px] shrink-0 items-center bg-[#646464] pl-[3px] pr-[3px] text-[#c6c6c6] " + c}>
      <span className="flex-1">{v}</span><Arrows />
    </div>
  );
}

function StatusBar() {
  return (
    <div className="flex h-[80px] text-[16.5px] tracking-[-0.4px] text-[#ececec]">
      <div className="ml-[4px] mt-[5px] w-[149px] shrink-0">
        <div className="h-[35px] border-2 border-t-[#8a8a8a] border-r-[#eee] border-b-[#fff] border-l-[#8a8a8a] bg-[#dbc3c6]" />
        <div className="mt-[1px] h-[36px] overflow-hidden whitespace-nowrap border-2 border-t-[#8a8a8a] border-r-[#eee] border-b-[#eee] border-l-[#8a8a8a] bg-white pl-[4px] font-['Liberation_Mono'] text-[17.700px] leading-[22px] tracking-normal text-[#8a8a8a]">MAXScript Mini</div>
      </div>
      <div className="ml-[4px] mt-[3px] h-[74px] w-[2px] shrink-0 bg-[#2c2c2c]" />
      <div className="ml-[3px] w-[1391px] shrink-0">
        <div className="mt-[16px] h-[20px] leading-[20px]">1 Object Selected</div>
        <div className="mt-[17px] h-[20px] leading-[20px] tracking-[-0.55px]">Click or click-and-drag to select objects</div>
      </div>
      <div className="w-[658px] shrink-0">
        <div className="mt-[11px] flex h-[26px] items-center">
          <Svg w={23} h={22}><path d="M1 6V1H5M18 1H22V6M22 16V21H18M5 21H1V16" stroke={L} strokeWidth="1.800" /><rect x="6" y="5" width="11" height="12" fill={T} /></Svg>
          <Svg w={20} h={24} c="ml-[17px]"><path d="M1 10H19V24H1Z" fill={L} /><path d="M4.500 10V7C4.500 0 15.500 0 15.500 7V10" stroke={L} strokeWidth="2.500" /><path d="M10 14V20" stroke={D} strokeWidth="2" /></Svg>
          <Svg w={22} h={22} c="ml-[20px]"><path d="M1.200 1.200H20.800V20.800H1.200ZM11 1V7M11 15V21M1 11H7M15 11H21" stroke={L} strokeWidth="2.200" /><path d="M7 7H15V15H7Z" stroke={L} strokeWidth="2" /></Svg>
          <span className="ml-[12px] w-[19px]">X:</span><SField v="-47,302" c="w-[102px]" />
          <span className="ml-[4px] w-[19px]">Y:</span><SField v="-9,107" c="w-[103px]" />
          <span className="ml-[4px] w-[19px]">Z:</span><SField v="83,227" c="w-[102px]" />
          <span className="ml-[7px]">Grid = 10,0</span>
        </div>
        <div className="mt-[9px] flex h-[31px] items-center pl-[454px]">
          <div className="flex h-[31px] w-[32px] items-center justify-center rounded-[4px] border border-[#3c5f8f] bg-[#5b87c0]"><Svg w={20} h={20}><path d="M10 1L18 5V14L10 19L2 14V5ZM2 5L10 10L18 5M10 10V19M5 8L10 12L15 8" stroke="#23354f" strokeWidth="1.500" /></Svg></div>
          <span className="ml-[6px] tracking-[-0.2px]">Add Time Tag</span>
        </div>
      </div>
      <div className="w-[181px] shrink-0">
        <div className="mt-[10px] flex h-[26px] items-center">
          <Svg w={24} h={16}><path d="M0 0H3V16H0ZM13 0V16L4 8ZM23 0V16L14 8Z" fill={L} /></Svg>
          <div className="ml-[6px] h-[24px] w-px bg-[#222]" />
          <Svg w={23} h={17} c="ml-[7px]"><path d="M10 0V17L0 8.500ZM12 0H16V17H12ZM19 0H23V17H19Z" fill={L} /></Svg>
          <Svg w={20} h={23} c="ml-[11px]"><path d="M0 0L20 11.500L0 23Z" fill={L} /></Svg>
          <Svg w={6} h={6} c="-mb-[3px] self-end"><path d="M6 0V6H0Z" fill="#e6e6e6" /></Svg>
          <Svg w={23} h={17} c="ml-[8px]"><path d="M13 0V17L23 8.500ZM7 0H11V17H7ZM0 0H4V17H0Z" fill={L} /></Svg>
          <div className="ml-[8px] h-[24px] w-px bg-[#222]" />
          <Svg w={24} h={16} c="ml-[5px]"><path d="M24 0H21V16H24ZM11 0V16L20 8ZM1 0V16L10 8Z" fill={L} /></Svg>
        </div>
        <div className="mt-[7px] flex h-[25px] items-center">
          <Svg w={22} h={12}><path d="M9 0V12L0 6ZM13 0V12L22 6Z" fill={L} /></Svg>
          <SField v="0" c="ml-[11px] w-[104px]" />
          <Svg w={24} h={24} c="ml-[10px]"><circle cx="9" cy="10" r="9" fill={L} /><path d="M9 4V11H14" stroke={D} strokeWidth="2" /><circle cx="17" cy="17" r="4" fill={D} stroke={O} strokeWidth="3" /><circle cx="17" cy="17" r="5.500" stroke={O} strokeWidth="2" strokeDasharray="2.200 2" /></Svg>
        </div>
      </div>
      <div className="ml-[9px] mt-[7px] flex h-[67px] w-[62px] shrink-0 items-center justify-center rounded-[5px] bg-[#666] text-[#d6d6d6]">
        <Svg w={42} h={42}><path d="M19 2V38M1 20H37" stroke={L} strokeWidth="5" /><path d="M24 40L36 26M28 36L32 40" stroke={T} strokeWidth="3" /><circle cx="36" cy="25" r="4.500" stroke={T} strokeWidth="3" fill={D} /></Svg>
      </div>
      <div className="ml-[6px] mt-[7px] w-[240px] shrink-0 text-[16px] text-[#d2d2d2]">
        <div className="flex h-[31px] items-start"><Btn t="Auto" w="w-[70px]" h="h-[31px]" /><div className="ml-[4px] flex h-[26px] w-[172px] items-center bg-[#646464] pl-[9px] pr-[9px]">Selected<Down c="ml-auto" w={10} h={8} /></div></div>
        <div className="mt-[2px] flex h-[31px] items-center"><Btn t="Set K." w="w-[70px]" h="h-[31px]" />
          <Svg w={28} h={28} c="ml-[8px]"><path d="M2 26C8 26 8 5 13 5S18 26 24 26" stroke={T} strokeWidth="2.500" /><path d="M3 4H23" stroke={L} strokeWidth="1.500" /><path d="M10 1H16V7H10Z" fill={D} stroke={L} /><circle cx="3" cy="4" r="2" fill={L} /><circle cx="23" cy="4" r="2" fill={L} /><path d="M28 22V28H22Z" fill="#eee" /></Svg>
          <Btn t="Filters..." w="ml-[5px] w-[134px]" h="h-[31px]" />
        </div>
      </div>
      <div className="ml-[26px] mt-[11px] grid h-[60px] shrink-0 grid-cols-[35px_34px_35px_30px] grid-rows-[24px_24px] gap-y-[9px]">
        <Svg w={24} h={24}><circle cx="14" cy="9" r="7" stroke={L} strokeWidth="3" /><path d="M9 14L2 23" stroke={L} strokeWidth="4" /></Svg>
        <Svg w={24} h={24}><path d="M6 0H12V6H6ZM14 0H21V7H14ZM14 9H21V16H14Z" fill={T} /><circle cx="9" cy="11" r="5" stroke={L} strokeWidth="2" fill={D} /><path d="M6 15L1 22" stroke={L} strokeWidth="3" /></Svg>
        <Svg w={26} h={25}><path d="M1 6V1H5M18 1H22V6M5 22H1V17" stroke={L} strokeWidth="1.800" /><path d="M11.500 3L19 7V16L11.500 20L4 16V7Z" fill={T} /><path d="M26 19V25H20Z" fill="#eee" /></Svg>
        <Svg w={28} h={25}><path d="M14 1L20 4V12L14 16L9 12V4Z" fill={T} /><path d="M1 15L5 11L9 15L5 19ZM8 18L12 14L16 18L12 22Z" fill={L} /><path d="M26 19V25H20Z" fill="#eee" /></Svg>
        <Svg w={24} h={24}><rect x="1" y="1" width="21" height="17" stroke={L} strokeWidth="1.800" strokeDasharray="4 2" /><circle cx="10" cy="13" r="4" stroke={T} strokeWidth="2" fill={D} /><path d="M7 16L3 22" stroke={T} strokeWidth="2.500" /></Svg>
        <Svg w={26} h={26}><path d="M4 12L1 9L3 8L6 11V3H8V10H9V1H11.500V10H12.500V2H15V11H16V5H18V15C18 20 15 22 12 22H9C6 22 5 18 4 12Z" fill={L} /><path d="M25 20V26H19Z" fill="#eee" /></Svg>
        <Svg w={26} h={26}><circle cx="11" cy="9" r="7" fill={T} /><path d="M16 2C26 0 22 12 12 20C4 25 0 21 5 14M20 4C22 10 14 18 8 20" stroke={L} strokeWidth="2.500" /><path d="M26 20V26H20Z" fill="#eee" /></Svg>
        <Svg w={24} h={24}><path d="M0 1H22V22H0Z" fill={L} /><path d="M10 4H19V13M19 4L8 14M2 15H9V20" stroke={D} strokeWidth="2.500" /></Svg>
      </div>
    </div>
  );
}

export default function App() {
  return (
    <div className="flex h-[1706px] w-[2880px] flex-col overflow-hidden bg-[#444444] font-['Noto_Sans',sans-serif] leading-5">
      <MenuBar />
      <Toolbar />
      <Ribbon />
      <div className="flex h-[1290px] shrink-0">
        <LayoutStrip />
        <Explorer />
        <div className="mt-[9px] h-[1280px] w-[1054px] shrink-0 bg-[#353535]"><TopView /></div>
        <div className="ml-[2px] mt-[9px] h-[1280px] w-[1052px] shrink-0 border-2 border-[#7d6f33] bg-[#353535]"><FrontView /></div>
        <CommandPanel />
      </div>
      <Timeline />
      <StatusBar />
    </div>
  );
}
